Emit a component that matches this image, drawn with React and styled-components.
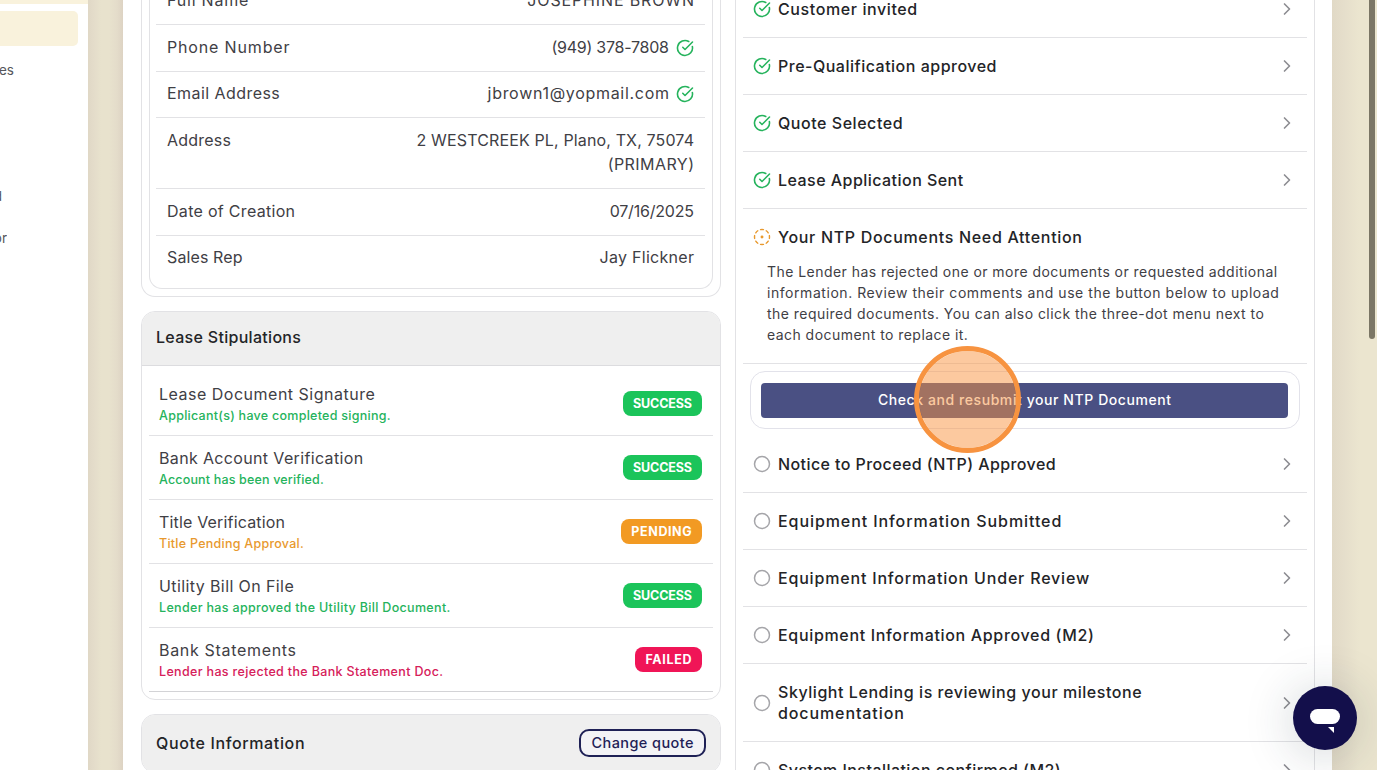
import React from "react";
import styled, { createGlobalStyle } from "styled-components";
import {
  ChevronRight,
  Circle,
  CircleCheckBig,
  CircleDotDashed,
} from "lucide-react";

const GlobalStyle = createGlobalStyle`
  * {
    box-sizing: border-box;
  }
  body {
    margin: 0;
    font-family: Inter, "Open Sans", sans-serif;
    font-size: 16px;
    color: #3f4045;
    overflow: hidden;
  }
`;

const Page = styled.div`
  position: relative;
  display: flex;
  width: 100vw;
  height: 100vh;
  overflow: hidden;
  background: #e9e3cd;
`;

/* sidebar */
const Sidebar = styled.aside`
  flex: 0 0 88px;
  background: #fff;
  border-top: 4px solid #f9f2dc;
`;
const ActiveItem = styled.div`
  width: 78px;
  height: 35px;
  margin: 7px 0 3px;
  background: #f9f2dc;
  border-radius: 0 5px 5px 0;
`;
const NavItem = styled.div`
  display: flex;
  align-items: center;
  width: 78px;
  height: 42px;
  font-size: 13.5px;
  color: #55565b;
  white-space: nowrap;
`;
const NavText = styled.span`
  display: flex;
  justify-content: flex-end;
  width: ${(p) => p.$end}px;
  overflow: hidden;
`;

const Gutter = styled.div`
  flex: 0 0 35px;
  background: linear-gradient(
    to right,
    #e0d8c6 0,
    #e4dcca 6px,
    #e8e2cd 13px,
    #e8e2cd 21px,
    #e4dcca 29px,
    #ddd3c3 35px
  );
`;
const Content = styled.main`
  display: flex;
  align-items: flex-start;
  gap: 14px;
  flex: 0 0 1209px;
  height: 100%;
  padding: 0 17px 0 18px;
  background: #fff;
`;
const RightGutter = styled.div`
  flex: 1;
  padding-left: 37px;
  background: linear-gradient(to right, #e1d9c6 0, #e5decb 12px, #ebe5cf 27px);
`;
const ScrollThumb = styled.div`
  width: 6px;
  height: 339px;
  background: #7b7665;
  border-radius: 0 0 3px 3px;
`;

const Text = styled.span`
  letter-spacing: ${(p) => p.$ls || 0}px;
  margin-right: ${(p) => -(p.$ls || 0)}px;
  white-space: nowrap;
`;

/* left column */
const LeftColumn = styled.div`
  display: flex;
  flex-direction: column;
  gap: 14px;
  flex: 0 0 580px;
`;
const Card = styled.section`
  border: 1px solid #e2e2e5;
  border-radius: 14px;
  overflow: hidden;
`;
const CustomerCard = styled(Card)`
  height: 319px;
  margin-top: -22px;
  padding: 0 7px 7px;
  border-top: 0;
  border-radius: 0 0 14px 14px;
`;
const CustomerInner = styled.div`
  height: 311px;
  padding: 0 7px 0 6px;
  border: 1px solid #e2e2e5;
  border-top: 0;
  border-radius: 0 0 13px 13px;
`;
const InfoRow = styled.div`
  display: flex;
  justify-content: space-between;
  height: ${(p) => p.$h}px;
  padding: ${(p) => (p.$h === 46 ? 9 : 10)}px 11px 0;
  line-height: 24px;
  border-bottom: 1px solid #e2e2e5;

  &:last-child {
    border-bottom: 0;
  }
`;
const InfoValue = styled.div`
  display: flex;
  align-items: center;
  gap: 7px;
  height: 24px;

  svg {
    color: #25b35c;
    margin-top: 1px;
  }
`;
const InfoLines = styled.div`
  display: flex;
  flex-direction: column;
  align-items: flex-end;
`;
const CardHeader = styled.header`
  display: flex;
  align-items: center;
  justify-content: space-between;
  height: ${(p) => p.$h || 54}px;
  padding: 0 14px ${(p) => (p.$h ? 0 : 3)}px;
  font-weight: 500;
  color: #232427;
  background: #efefef;
  border-bottom: 1px solid #dcdcdf;
`;
const StipList = styled.div`
  padding: 6px 7px 7px;
`;
const StipRow = styled.div`
  display: flex;
  align-items: center;
  justify-content: space-between;
  height: 64px;
  padding: 0 11px 0 10px;
  border-bottom: 1px solid #e2e2e5;

  &:last-child {
    border-bottom-color: #d3d3d6;
  }
`;
const StipText = styled.div`
  display: flex;
  flex-direction: column;
  line-height: 22px;
  padding-top: 2px;
`;
const StipNote = styled(Text)`
  font-size: 12.5px;
  font-weight: 500;
  line-height: 21px;
  color: ${(p) => p.$color};
`;
const Badge = styled.span`
  display: flex;
  align-items: center;
  justify-content: center;
  width: ${(p) => p.$w}px;
  height: 25px;
  font-size: 12.5px;
  font-weight: 700;
  color: #fff;
  background: ${(p) => p.$bg};
  border-radius: 8px;
`;
const ChangeQuote = styled.button`
  display: flex;
  align-items: center;
  justify-content: center;
  width: 127px;
  height: 28px;
  padding: 0 0 1px;
  font: 500 14.5px Inter, sans-serif;
  color: #1f2156;
  background: #f3f3f6;
  border: 2px solid #1f2156;
  border-radius: 10px;
`;

/* right column */
const Timeline = styled.section`
  flex: 0 0 580px;
  height: 100%;
  padding: 0 7px;
  border: solid #e2e2e5;
  border-width: 0 1px;
  overflow: hidden;
`;
const StepList = styled.div`
  margin-top: ${(p) => p.$top}px;
`;
const Step = styled.div`
  display: flex;
  align-items: center;
  gap: 7px;
  height: ${(p) => p.$h || 57}px;
  padding: 0 10px;
  border-bottom: 1px solid #e2e2e5;
`;
const StepTitle = styled.div`
  display: flex;
  flex: 1;
  flex-direction: column;
  font-weight: 500;
  line-height: 21px;
  color: #232427;
`;
const Attention = styled.div`
  height: 155px;
  border-bottom: 1px solid #e2e2e5;
`;
const AttentionHead = styled(Step)`
  height: 56px;
  border-bottom: 0;
`;
const AttentionBody = styled.div`
  display: flex;
  flex-direction: column;
  margin-top: -4px;
  padding-left: 24px;
  font-size: 14px;
  line-height: 21px;
`;
const ActionCard = styled.div`
  margin: 7px 7px 0;
  padding: 11px 11px 11px 10px;
  height: 58px;
  border: 1px solid #e2e2ea;
  border-radius: 15px;
`;
const ActionButton = styled.button`
  display: block;
  width: 527px;
  height: 35px;
  padding: 0 0 2px;
  font: 500 14px Inter, sans-serif;
  color: #fff;
  background: #4a5083;
  border: 0;
  border-radius: 4px;
`;

/* overlays */
const ClickMarker = styled.div`
  position: absolute;
  left: 914px;
  top: 346px;
  width: 107px;
  height: 107px;
  background: rgba(249, 147, 64, 0.5);
  border: 5px solid #f79340;
  background-clip: padding-box;
  border-radius: 50%;
`;
const ChatButton = styled.div`
  position: absolute;
  right: 20px;
  bottom: 20px;
  display: flex;
  width: 64px;
  height: 64px;
  background: #130f4b;
  border-radius: 50%;
  box-shadow: 0 4px 50px rgba(30, 50, 60, 0.22);
`;

const GREEN = "#25b35c";

const customer = [
  { label: "Full Name", ls: 0.8, value: "JOSEPHINE BROWN", vls: 0.86, h: 47 },
  { label: "Phone Number", ls: 0.84, value: "(949) 378-7808", vls: -0.24, h: 47, verified: true },
  { label: "Email Address", ls: 0.44, value: "jbrown1@yopmail.com", vls: 0.7, h: 46, verified: true },
  {
    label: "Address",
    ls: 0.22,
    lines: [
      ["2 WESTCREEK PL, Plano, TX, 75074", 0.14],
      ["(PRIMARY)", 0.45],
    ],
    h: 71,
  },
  { label: "Date of Creation", ls: 0.3, value: "07/16/2025", vls: -0.2, h: 47 },
  { label: "Sales Rep", ls: 0.12, value: "Jay Flickner", vls: 0.28, h: 46 },
];

const badges = {
  SUCCESS: { bg: "#1bc45a", w: 79, ls: -0.15 },
  PENDING: { bg: "#f29a23", w: 81, ls: 0.6 },
  FAILED: { bg: "#f01557", w: 67, ls: 0.65 },
};

const stipulations = [
  ["Lease Document Signature", 0.5, "Applicant(s) have completed signing.", 0.27, GREEN, "SUCCESS"],
  ["Bank Account Verification", 0.35, "Account has been verified.", 0.17, GREEN, "SUCCESS"],
  ["Title Verification", 0.17, "Title Pending Approval.", 0.26, "#e8992e", "PENDING"],
  ["Utility Bill On File", 0.4, "Lender has approved the Utility Bill Document.", 0.33, GREEN, "SUCCESS"],
  ["Bank Statements", 0.68, "Lender has rejected the Bank Statement Doc.", 0.34, "#d6205a", "FAILED"],
];

const doneSteps = [
  [["Customer invited", 0.6]],
  [["Pre-Qualification approved", 0.5]],
  [["Quote Selected", 0.54]],
  [["Lease Application Sent", 0.46]],
];

const attentionLines = [
  ["The Lender has rejected one or more documents or requested additional", 0.45],
  ["information. Review their comments and use the button below to upload", 0.555],
  ["the required documents. You can also click the three-dot menu next to", 0.455],
  ["each document to replace it.", 0.45],
];

const nextSteps = [
  [["Notice to Proceed (NTP) Approved", 0.41]],
  [["Equipment Information Submitted", 0.92]],
  [["Equipment Information Under Review", 0.82]],
  [["Equipment Information Approved (M2)", 0.67]],
  [
    ["Skylight Lending is reviewing your milestone", 0.55],
    ["documentation", 0.9],
  ],
  [["System Installation confirmed (M2)", 0.45]],
];

function TimelineStep({ lines, done }) {
  return (
    <Step $h={lines.length > 1 ? 78 : 57}>
      {done ? (
        <CircleCheckBig size={18} color={GREEN} strokeWidth={2.1} />
      ) : (
        <Circle size={18} color="#a5a5a9" strokeWidth={2} />
      )}
      <StepTitle>
        {lines.map(([text, ls]) => (
          <Text key={text} $ls={ls}>
            {text}
          </Text>
        ))}
      </StepTitle>
      <ChevronRight size={20} color="#8d8d92" />
    </Step>
  );
}

function App() {
  return (
    <>
      <GlobalStyle />
      <Page>
        <Sidebar>
          <ActiveItem />
          <NavItem>
            <NavText $end={14}>es</NavText>
          </NavItem>
          <NavItem />
          <NavItem />
          <NavItem>
            <NavText $end={2}>d</NavText>
          </NavItem>
          <NavItem>
            <NavText $end={7}>or</NavText>
          </NavItem>
        </Sidebar>
        <Gutter />
        <Content>
          <LeftColumn>
            <CustomerCard>
              <CustomerInner>
                {customer.map((row) => (
                  <InfoRow key={row.label} $h={row.h}>
                    <Text $ls={row.ls}>{row.label}</Text>
                    {row.lines ? (
                      <InfoLines>
                        {row.lines.map(([text, ls]) => (
                          <Text key={text} $ls={ls}>
                            {text}
                          </Text>
                        ))}
                      </InfoLines>
                    ) : (
                      <InfoValue>
                        <Text $ls={row.vls}>{row.value}</Text>
                        {row.verified && <CircleCheckBig size={18} strokeWidth={2.1} />}
                      </InfoValue>
                    )}
                  </InfoRow>
                ))}
              </CustomerInner>
            </CustomerCard>

            <Card>
              <CardHeader>
                <Text $ls={0.3}>Lease Stipulations</Text>
              </CardHeader>
              <StipList>
                {stipulations.map(([title, ls, note, nls, color, status]) => (
                  <StipRow key={title}>
                    <StipText>
                      <Text $ls={ls}>{title}</Text>
                      <StipNote $ls={nls} $color={color}>
                        {note}
                      </StipNote>
                    </StipText>
                    <Badge $bg={badges[status].bg} $w={badges[status].w}>
                      <Text $ls={badges[status].ls}>{status}</Text>
                    </Badge>
                  </StipRow>
                ))}
              </StipList>
            </Card>

            <Card>
              <CardHeader $h={57}>
                <Text $ls={0.64}>Quote Information</Text>
                <ChangeQuote>
                  <Text $ls={0.42}>Change quote</Text>
                </ChangeQuote>
              </CardHeader>
            </Card>
          </LeftColumn>

          <Timeline>
            <StepList $top={-19}>
              {doneSteps.map((lines) => (
                <TimelineStep key={lines[0][0]} lines={lines} done />
              ))}
            </StepList>
            <Attention>
              <AttentionHead>
                <CircleDotDashed size={18} color="#e8992e" strokeWidth={1.9} />
                <StepTitle>
                  <Text $ls={0.68}>Your NTP Documents Need Attention</Text>
                </StepTitle>
              </AttentionHead>
              <AttentionBody>
                {attentionLines.map(([text, ls]) => (
                  <Text key={text} $ls={ls}>
                    {text}
                  </Text>
                ))}
              </AttentionBody>
            </Attention>
            <ActionCard>
              <ActionButton>
                <Text $ls={0.58}>Check and resubmit your NTP Document</Text>
              </ActionButton>
            </ActionCard>
            <StepList $top={7}>
              {nextSteps.map((lines) => (
                <TimelineStep key={lines[0][0]} lines={lines} />
              ))}
            </StepList>
          </Timeline>
        </Content>
        <RightGutter>
          <ScrollThumb />
        </RightGutter>
        <ClickMarker />
        <ChatButton>
          <svg width="64" height="64" viewBox="0 0 64 64" fill="#fff">
            <rect x="17" y="23" width="30" height="15" rx="7.5" />
            <path d="M35 41h6v6z" />
          </svg>
        </ChatButton>
      </Page>
    </>
  );
}

export default App;
